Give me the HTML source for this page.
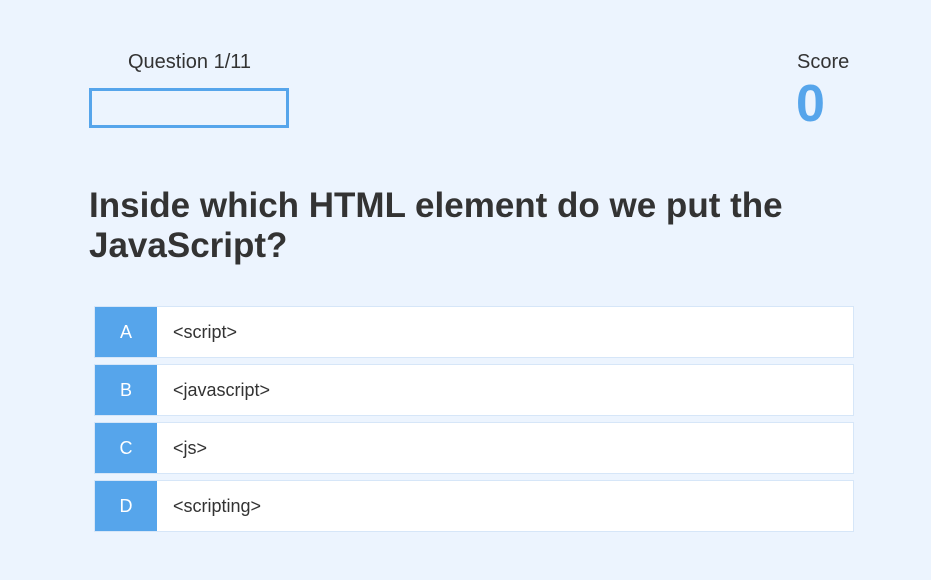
<!DOCTYPE html>
<html><head><style>
body{margin:0;background:#ecf4fe;font-family:"Liberation Sans",sans-serif;color:#333;width:931px;height:580px;overflow:hidden;position:relative}
.a{position:absolute}
.opt{position:absolute;left:94px;width:758px;height:50px;border:1px solid #d6e6f8;background:#fff}
.opt .l{position:absolute;left:0;top:0;width:62px;height:50px;background:#56a5eb;color:#fff;font-size:18px;line-height:50px;text-align:center}
.opt .t{position:absolute;left:78px;top:0;line-height:50px;font-size:18px}
</style></head><body>
<div class="a" style="left:128px;top:51px;font-size:20px">Question 1/11</div>
<div class="a" style="left:89px;top:88px;width:194px;height:34px;border:3px solid #56a5eb"></div>
<div class="a" style="left:797px;top:51px;font-size:20px">Score</div>
<div class="a" style="left:796px;top:73px;font-size:52px;font-weight:bold;color:#56a5eb;line-height:62px">0</div>
<div class="a" style="left:89px;top:186px;width:780px;font-size:35px;font-weight:bold;line-height:40px">Inside which HTML element do we put the JavaScript?</div>
<div class="opt" style="top:306px"><div class="l">A</div><div class="t">&lt;script&gt;</div></div>
<div class="opt" style="top:364px"><div class="l">B</div><div class="t">&lt;javascript&gt;</div></div>
<div class="opt" style="top:422px"><div class="l">C</div><div class="t">&lt;js&gt;</div></div>
<div class="opt" style="top:480px"><div class="l">D</div><div class="t">&lt;scripting&gt;</div></div>
</body></html>
